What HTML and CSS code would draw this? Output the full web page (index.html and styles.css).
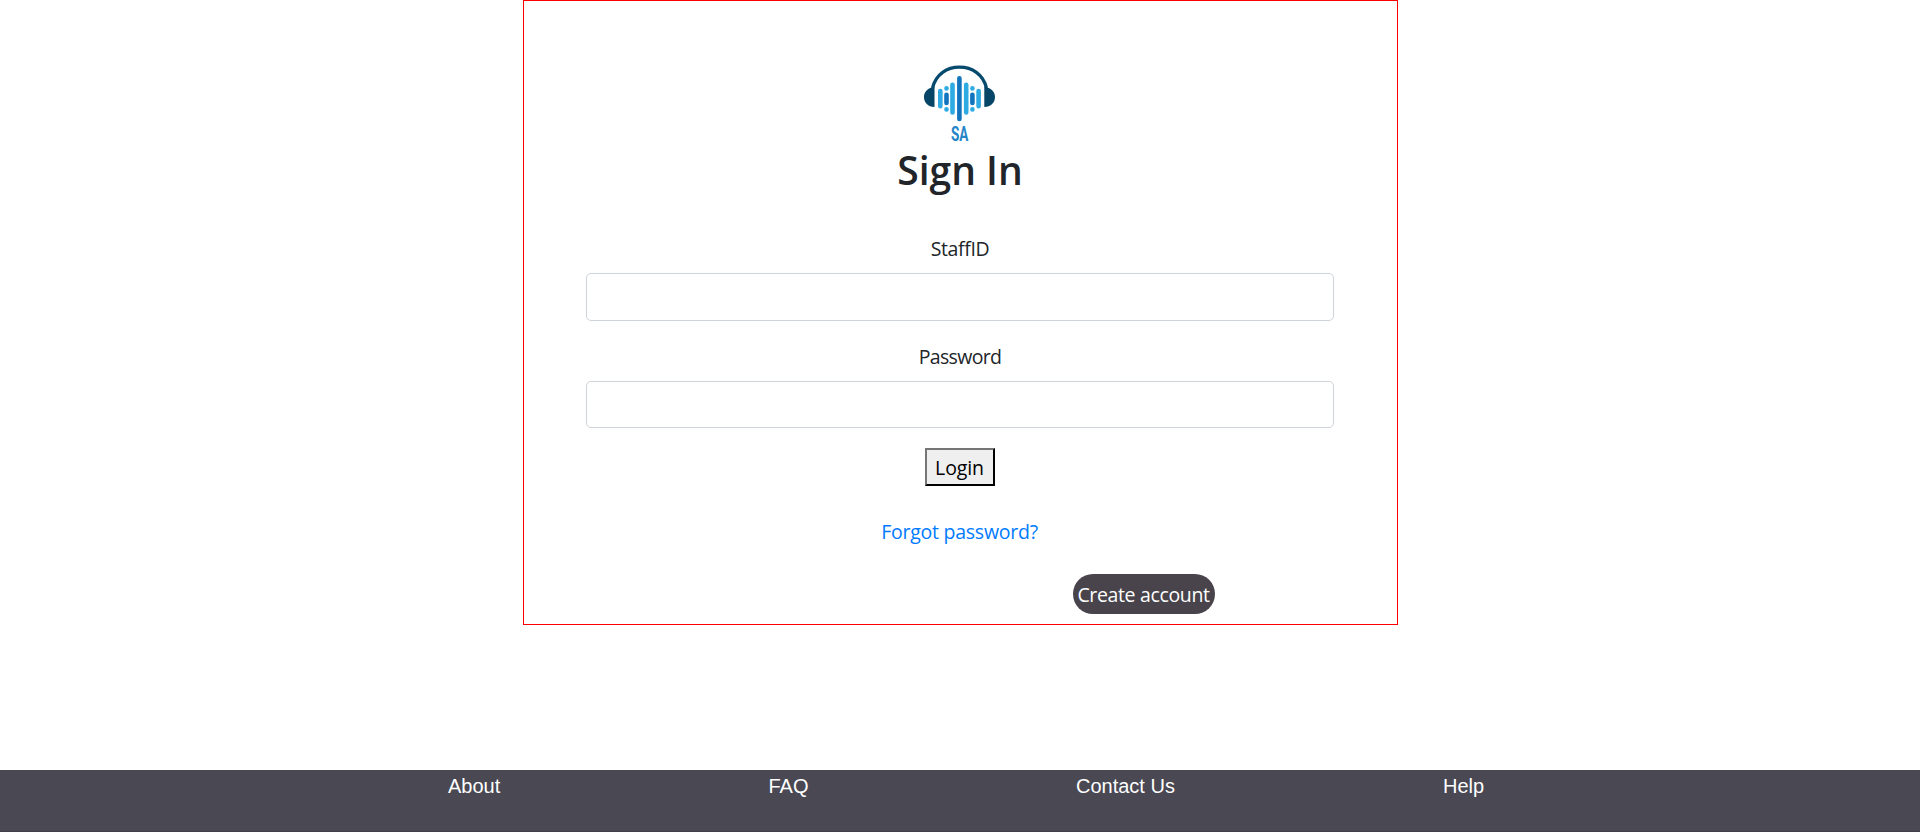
FILE: index.html
```html
<!DOCTYPE html>
<html lang="en">
<head>
<meta charset="utf-8">
<title>Sign In</title>
<link rel="stylesheet" href="styles.css">
</head>
<body>
<main class="card">
  <svg class="logo" viewBox="0 0 100 95" role="img" aria-label="SA">
    <path d="M22.500 33C26 19 37 12.200 49.500 12.200S73 19 76.500 33" fill="none" stroke="#064a6e" stroke-width="3.200"/>
    <path d="M24.500 31.500V52C18 52 14 47.500 14 42S18 33 24.500 31.500ZM74.300 31.500V52C81 52 85 47.500 85 42S81 33 74.300 31.500Z" fill="#064565"/>
    <g fill="none" stroke-width="4.600" stroke-linecap="round">
      <path d="M30.300 36V51.300M42.500 29.800V57.500M56.200 29.800V57.500M68.600 36V51.300M36.500 33.300V33.400M36.500 54.300V54.400M62.400 33.300V33.400M62.400 54.300V54.400" stroke="#2eabe2"/>
      <path d="M49.400 23.300V64M36.500 39.800V48M62.400 39.800V48" stroke="#1174bd"/>
    </g>
    <text class="logo-text" x="41" y="86" textLength="17.400" lengthAdjust="spacingAndGlyphs">SA</text>
  </svg>
  <h1 class="title">Sign In</h1>
  <form class="form">
    <label class="label label-staff" for="staff">StaffID</label>
    <input class="field field-staff" id="staff" type="text">
    <label class="label" for="password">Password</label>
    <input class="field field-password" id="password" type="password">
    <button class="login" type="button">Login</button>
  </form>
  <a class="forgot" href="#">Forgot password?</a>
  <a class="create" href="#">Create account</a>
</main>
<footer class="footer">
  <a class="link" href="#">About</a>
  <a class="link" href="#">FAQ</a>
  <a class="link" href="#">Contact Us</a>
  <a class="link" href="#">Help</a>
</footer>
</body>
</html>
```
FILE: styles.css
```css
* { box-sizing: border-box; }
body {
  margin: 0;
  height: 832px;
  display: flex;
  flex-direction: column;
  align-items: center;
  justify-content: space-between;
  overflow: hidden;
  background: #fff;
  color: #212529;
  font: 19.5px/30px "Segoe UI", "Open Sans", "Noto Sans", sans-serif;
}
a { text-decoration: none; }
.card {
  width: 875px;
  height: 625px;
  margin-left: 1px;
  padding: 54px 63px 0 61px;
  border: 1px solid #f00;
  display: flex;
  flex-direction: column;
  align-items: center;
}
.logo { width: 100px; height: 95px; flex: none; }
.logo-text { font: bold 19.5px "Roboto", sans-serif; fill: #2585c7; }
.title {
  margin: -4px 0 0 1px;
  font-size: 39px;
  line-height: 48px;
  font-weight: 600;
  letter-spacing: 0;
}
.form {
  width: 748px;
  margin-top: 40px;
  display: flex;
  flex-direction: column;
  align-items: center;
}
.label { margin-left: 1px; letter-spacing: -0.65px; }
.label-staff { letter-spacing: -0.35px; }
.field {
  width: 748px;
  padding: 0 12px;
  border: 1px solid #ced4da;
  border-radius: 5px;
  font: inherit;
}
.field-staff { height: 48px; margin: 9px 0 21px; }
.field-password { height: 47px; margin: 9px 0 20px; }
.login {
  width: 70px;
  height: 38px;
  padding: 2px 0 0;
  border: 2px outset #000;
  border-color: #767676 #212121 #212121 #767676;
  background: #efefef;
  color: #000;
  font: inherit;
  letter-spacing: -0.1px;
}
.forgot { margin-top: 31px; color: #007bff; letter-spacing: -0.25px; }
.create {
  width: 142px;
  height: 40px;
  margin: 27px 0 0 368px;
  border-radius: 20px;
  background: #49444b;
  color: #fff;
  line-height: 41px;
  text-align: center;
  white-space: nowrap;
  letter-spacing: -0.35px;
}
.footer {
  width: 100%;
  height: 62px;
  padding: 1px 0 0 448px;
  display: grid;
  grid-template-columns: 320.500px 307.500px 367px auto;
  border-bottom: 1px solid #403f48;
  background: #494853;
  font: 20px/30px "Liberation Sans", Arial, sans-serif;
}
.link { color: #fff; }
```
